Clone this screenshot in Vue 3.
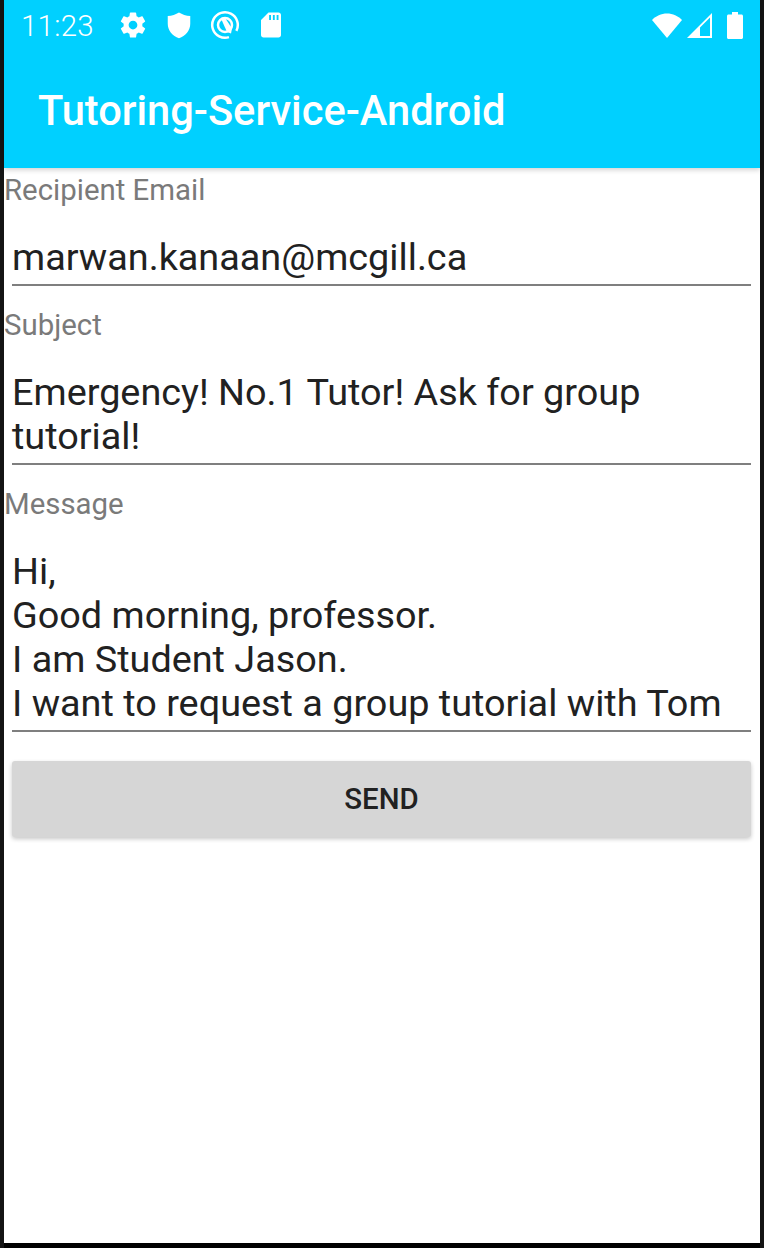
<script setup>
const fields = [
  { label: 'Recipient Email', lines: ['marwan.kanaan@mcgill.ca'] },
  { label: 'Subject', lines: ['Emergency! No.1 Tutor! Ask for group', 'tutorial!'] },
  { label: 'Message', lines: ['Hi,', 'Good morning, professor.', 'I am Student Jason.', 'I want to request a group tutorial with Tom'] },
]
</script>

<template>
  <div class="frame">
    <div class="screen">
      <header class="appbar">
        <div class="status">
          <span class="time">11:23</span>
          <div class="left-icons">
            <svg viewBox="0 0 24 24" width="30" height="30"><path fill="#fff" d="M19.43 12.98c.04-.32.07-.64.07-.98s-.03-.66-.07-.98l2.11-1.65c.19-.15.24-.42.12-.64l-2-3.46c-.12-.22-.39-.3-.61-.22l-2.49 1c-.52-.4-1.08-.73-1.69-.98l-.38-2.65C14.46 2.18 14.25 2 14 2h-4c-.25 0-.46.18-.49.42l-.38 2.65c-.61.25-1.17.59-1.69.98l-2.49-1c-.23-.09-.49 0-.61.22l-2 3.46c-.13.22-.07.49.12.64l2.11 1.65c-.04.32-.07.65-.07.98s.03.66.07.98l-2.11 1.65c-.19.15-.24.42-.12.64l2 3.46c.12.22.39.3.61.22l2.49-1c.52.4 1.08.73 1.69.98l.38 2.65c.03.24.24.42.49.42h4c.25 0 .46-.18.49-.42l.38-2.65c.61-.25 1.17-.59 1.69-.98l2.49 1c.23.09.49 0 .61-.22l2-3.46c.12-.22.07-.49-.12-.64l-2.11-1.65zM12 15.5c-1.93 0-3.5-1.57-3.5-3.5s1.57-3.5 3.5-3.5 3.5 1.57 3.5 3.5-1.57 3.500-3.500 3.500z"/></svg>
            <svg viewBox="0 0 24 24" width="30" height="30"><path fill="#fff" d="M12 2C9.500 3.600 6.300 4.600 3 4.800v6.200c0 5.300 3.800 10.100 9 11.500 5.200-1.400 9-6.200 9-11.500V4.800C17.700 4.600 14.500 3.600 12 2z"/></svg>
            <svg viewBox="0 0 30 30" width="30" height="30"><circle cx="15" cy="15" r="12.800" fill="none" stroke="#fff" stroke-width="2.500" stroke-dasharray="70 10.400" transform="rotate(72 15 15)"/><circle cx="15" cy="15" r="7" fill="none" stroke="#fff" stroke-width="2.500"/><path fill="#fff" d="M11 8.500 14.500 7 22 18.500 21 23.500 17 22z"/></svg>
            <svg viewBox="0 0 24 24" width="30" height="30"><path fill="#fff" d="M18 2h-8L4 8v12c0 1.100.9 2 2 2h12c1.100 0 2-.9 2-2V4c0-1.100-.9-2-2-2zm-6 6h-1.500V4H12zm3 0h-1.500V4H15zm3 0h-1.500V4H18z"/></svg>
          </div>
          <div class="right-icons">
            <svg class="wifi" viewBox="0 0 30 25" width="30" height="25"><path fill="#fff" d="M15 25 0 7C4 3 9.200.5 15 .5S26 3 30 7z"/></svg>
            <svg class="signal" viewBox="0 0 25 25" width="25" height="25"><path fill="#fff" fill-rule="evenodd" d="M0 25 25 0v25zM13 23h10V4.500L13 14.500z"/></svg>
            <svg class="batt" viewBox="0 0 16 27" width="16" height="27"><path fill="#fff" d="M5 0h6v2.500h3.500c.8 0 1.500.7 1.500 1.500v21.500c0 .8-.7 1.500-1.500 1.500h-13C.7 27 0 26.300 0 25.500V4c0-.8.7-1.500 1.500-1.500H5z"/></svg>
          </div>
        </div>
        <h1 class="title">Tutoring-Service-Android</h1>
      </header>

      <main class="form">
        <section v-for="f in fields" :key="f.label" class="field">
          <label class="label">{{ f.label }}</label>
          <div class="input">
            <div v-for="(line, i) in f.lines" :key="i" class="line">{{ line }}</div>
          </div>
        </section>
        <button class="send">SEND</button>
      </main>
    </div>
  </div>
</template>

<style>
html, body { margin: 0; background: #000; }
</style>

<style scoped>
.frame {
  width: 764px;
  height: 1248px;
  box-sizing: border-box;
  background: #000;
  padding: 0 4px 5px;
  overflow: hidden;
  font-family: Roboto, "Liberation Sans", sans-serif;
  box-shadow: inset 4px 0 0 #141414, inset -4px 0 0 #141414;
}
.screen {
  height: 100%;
  background: #fff;
  display: flex;
  flex-direction: column;
}
.appbar {
  height: 168px;
  flex: none;
  background: #00d0ff;
  box-shadow: 0 2px 5px rgba(0, 0, 0, 0.18);
  color: #fff;
  position: relative;
}
.status {
  height: 50px;
  display: flex;
  align-items: center;
  padding: 0 17px 0 17px;
}
.time {
  font-size: 29.4px;
  font-weight: 300;
  letter-spacing: 0.3px;
  width: 96.5px;
  padding-top: 2px;
}
.left-icons {
  display: flex;
  gap: 16px;
  align-items: center;
}
.right-icons {
  margin-left: auto;
  display: flex;
  align-items: center;
  gap: 5px;
}
.batt {
  margin-left: 10px;
}
.title {
  margin: 39px 0 0 34px;
  font-size: 41.6px;
  line-height: 44px;
  font-weight: 500;
  color: #fff;
}
.form {
  display: flex;
  flex-direction: column;
  padding-top: 5px;
}
.field {
  display: flex;
  flex-direction: column;
  margin-bottom: 22px;
}
.field:last-of-type {
  margin-bottom: 29px;
}
.label {
  font-size: 29.4px;
  line-height: 34px;
  color: #7a7a7a;
}
.input {
  margin: 0 9px 0 8px;
  padding: 28px 0 5px;
  border-bottom: 2px solid #7f7f7f;
}
.line {
  font-size: 37.8px;
  line-height: 44px;
  color: #212121;
  white-space: nowrap;
}
.send {
  margin: 0 9px 0 8px;
  height: 76px;
  border: 0;
  border-radius: 3px;
  background: #d6d6d6;
  box-shadow: 0 2px 4px rgba(0, 0, 0, 0.22);
  font-family: inherit;
  font-size: 29.4px;
  font-weight: 500;
  color: #212121;
  padding: 0;
}
</style>
